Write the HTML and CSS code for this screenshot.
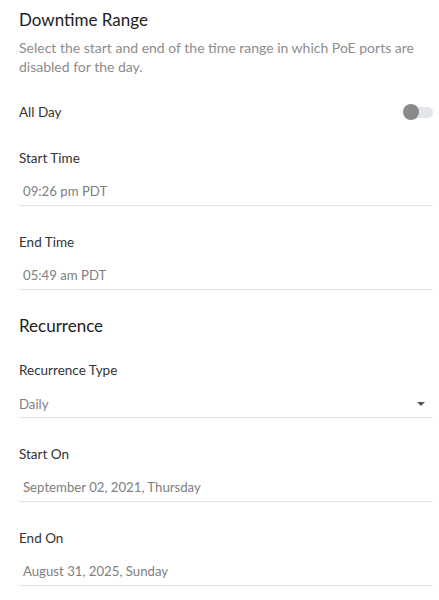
FILE: index.html
```html
<!DOCTYPE html>
<html lang="en">
<head>
  <meta charset="UTF-8">
  <meta name="viewport" content="width=device-width, initial-scale=1">
  <title>Downtime Schedule</title>
  <link rel="stylesheet" href="styles.css">
</head>
<body>
  <div class="pagina">
    <h2 class="secao-titulo">Downtime Range</h2>
    <p class="descricao">Select the start and end of the time range in which PoE ports are disabled for the day.</p>

    <div class="linha-toggle">
      <span class="rotulo">All Day</span>
      <span class="toggle"><span class="toggle-bola"></span></span>
    </div>

    <div class="campo">
      <div class="rotulo">Start Time</div>
      <div class="valor">09:26 pm PDT</div>
    </div>

    <div class="campo">
      <div class="rotulo">End Time</div>
      <div class="valor">05:49 am PDT</div>
    </div>

    <h2 class="secao-titulo recorrencia">Recurrence</h2>

    <div class="campo primeiro">
      <div class="rotulo">Recurrence Type</div>
      <div class="valor select">
        <span>Daily</span>
        <span class="seta"></span>
      </div>
    </div>

    <div class="campo">
      <div class="rotulo">Start On</div>
      <div class="valor">September 02, 2021, Thursday</div>
    </div>

    <div class="campo">
      <div class="rotulo">End On</div>
      <div class="valor">August 31, 2025, Sunday</div>
    </div>
  </div>
</body>
</html>
```

FILE: styles.css
```css
body {
  margin: 0;
  background-color: #fff;
  font-family: Lato, "Open Sans", sans-serif;
  color: #2b2b2b;
}
.pagina {
  padding: 8px 6px 0 19px;
}
.secao-titulo {
  margin: 0;
  font-size: 17px;
  line-height: 24px;
  font-weight: normal;
  color: #222;
}
.descricao {
  margin: 6px 0 0;
  font-size: 14px;
  line-height: 19px;
  color: #8c8c8c;
}
.linha-toggle {
  margin-top: 26px;
  display: flex;
  align-items: center;
  justify-content: space-between;
}
.rotulo {
  font-size: 13.5px;
  line-height: 20px;
  color: #333;
}
.toggle {
  position: relative;
  width: 28px;
  height: 11px;
  border-radius: 6px;
  background-color: #e2e6ea;
}
.toggle-bola {
  position: absolute;
  left: -2px;
  top: -3px;
  width: 16px;
  height: 16px;
  border-radius: 50%;
  background-color: #8a8a8a;
}
.campo {
  margin-top: 26px;
}
.campo.primeiro {
  margin-top: 22px;
}
.valor {
  padding: 13px 0 4px 4px;
  font-size: 13.2px;
  line-height: 20px;
  color: #808080;
  border-bottom: 1px solid #e3e3e3;
}
.recorrencia {
  margin-top: 24px;
}
.valor.select {
  display: flex;
  align-items: center;
  justify-content: space-between;
  padding: 14px 8px 3px 0;
}
.seta {
  width: 0;
  height: 0;
  border-left: 4px solid transparent;
  border-right: 4px solid transparent;
  border-top: 4px solid #555;
}
```
